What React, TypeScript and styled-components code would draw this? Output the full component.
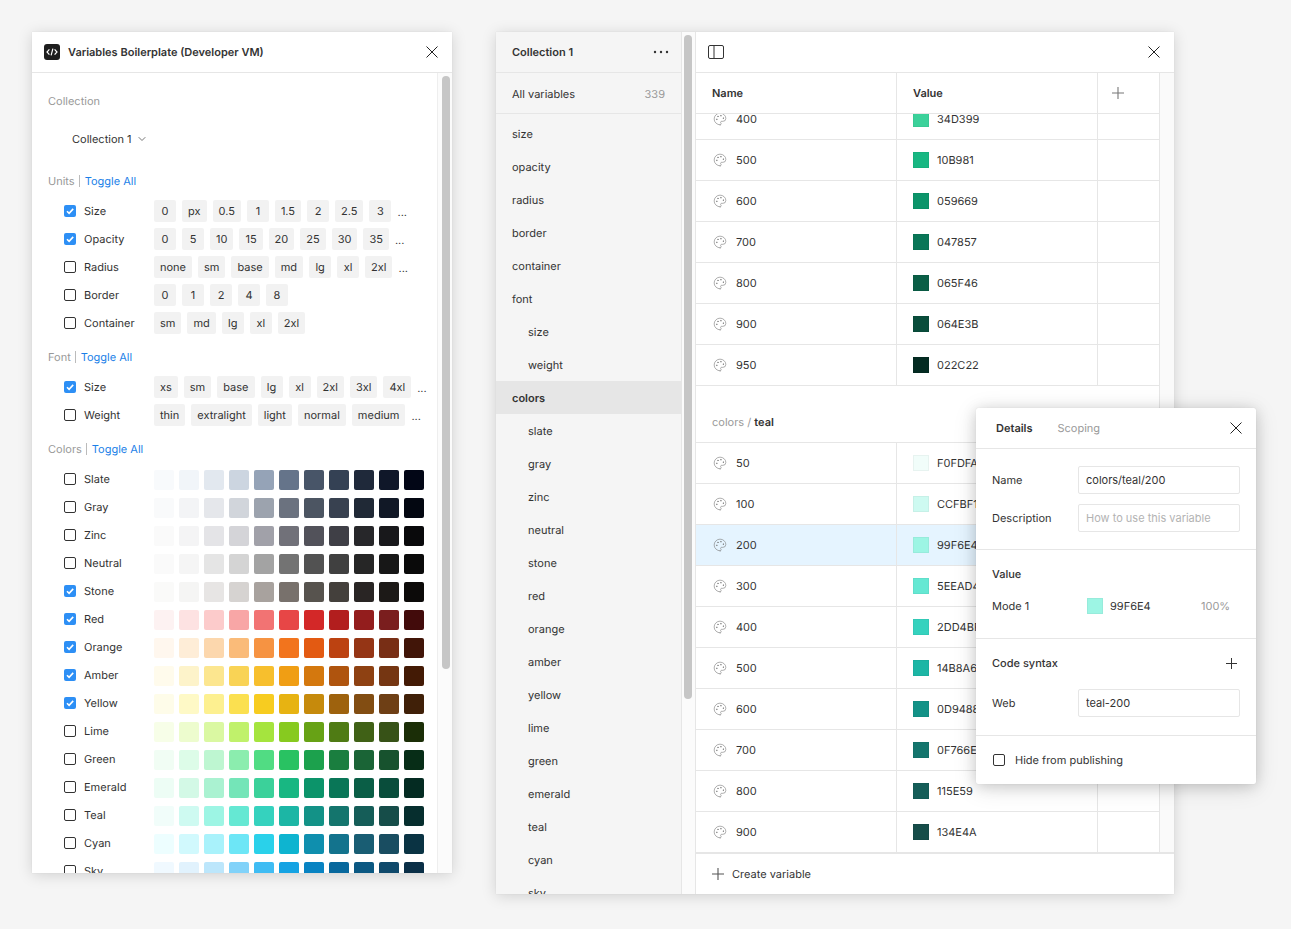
import React from "react";
import styled, { createGlobalStyle } from "styled-components";
import { Palette } from "lucide-react";

const Global = createGlobalStyle`
  html, body { margin: 0; padding: 0; background: #f5f5f5; }
  body { font-family: Inter, "Noto Sans", sans-serif; font-size: 11px; color: #333; text-rendering: geometricPrecision; }
  * { box-sizing: border-box; }
`;

const line = "#e6e6e6";

const Page = styled.div`
  position: relative; width: 1291px; height: 929px; overflow: hidden;
  display: flex; align-items: flex-start; gap: 44px; padding: 32px;
  background: #f5f5f5;
`;
const PluginWindow = styled.section`
  width: 420px; height: 841px; background: #fff; display: flex; flex-direction: column;
  box-shadow: 0 2px 14px rgba(0,0,0,.15), 0 0 1px rgba(0,0,0,.1);
`;
const TitleBar = styled.header`
  height: 41px; flex: none; display: flex; align-items: center; padding: 0 14px 0 12px; gap: 8px;
  border-bottom: 1px solid ${line};
`;
const LogoBox = styled.div`
  width: 16px; height: 16px; border-radius: 3px; background: #1e1e1e; display: flex; align-items: center; justify-content: center;
`;
const Title = styled.h1`
  flex: 1; margin: 0; font-size: 11px; font-weight: 600; color: #333; line-height: 16px;
`;
const CloseBtn = styled.svg`
  width: 12px; height: 12px; flex: none; stroke: #222; stroke-width: 1; fill: none;
`;
const PluginBody = styled.div`
  flex: 1; min-height: 0; display: flex;
`;
const PluginContent = styled.div`
  width: 405px; padding: 20px 0 0 16px; overflow: hidden;
`;
const ScrollGutter = styled.div<{ $w: number; $border?: boolean }>`
  width: ${p => p.$w}px; flex: none; padding: 3px 3px 0 ${p => p.$w - 11}px; background: #fbfbfb;
  border-left: ${p => (p.$border ? `1px solid #eee` : "none")};
`;
const ScrollThumb = styled.div<{ $h: number }>`
  width: 8px; height: ${p => p.$h}px; border-radius: 4px; background: #c6c6c6;
`;
const MutedLabel = styled.div`
  height: 16px; line-height: 16px; color: #999;
`;
const SelectRow = styled.div`
  height: 28px; margin: 16px 0 20px; padding-left: 24px; display: flex; align-items: center; gap: 6px; color: #333;
`;
const SectionHead = styled.div<{ $mt?: number }>`
  height: 16px; line-height: 16px; display: flex; align-items: center; gap: 4px; color: #999;
  margin-top: ${p => p.$mt ?? 0}px;
`;
const Divider = styled.span`
  width: 1px; height: 12px; background: #bbb;
`;
const ToggleLink = styled.a`
  color: #1a7fe8; margin-left: 1px;
`;
const RowList = styled.div<{ $mt: number }>`
  margin-top: ${p => p.$mt}px; padding-left: 16px; display: flex; flex-direction: column; gap: 6px;
`;
const OptRow = styled.div`
  height: 22px; display: flex; align-items: center;
`;
const Box = styled.span<{ $on?: boolean }>`
  width: 12px; height: 12px; flex: none; border-radius: 2px; display: flex; align-items: center; justify-content: center;
  background: ${p => (p.$on ? "#2d8ff5" : "#fff")};
  border: ${p => (p.$on ? "none" : "1px solid #333")};
`;
const OptName = styled.span`
  width: 78px; padding-left: 8px; flex: none; color: #333;
`;
const ChipSet = styled.div`
  display: flex; align-items: center; gap: 6px;
`;
const Chip = styled.span`
  height: 22px; min-width: 22px; padding: 0 6px; border-radius: 2px; background: #f2f2f2;
  display: flex; align-items: center; justify-content: center; color: #333; white-space: nowrap;
`;
const More = styled.span`
  color: #333; padding-top: 2px;
`;
const SwatchSet = styled.div`
  display: flex; gap: 5px; padding-top: 2px;
`;
const Swatch = styled.span<{ $c: string }>`
  width: 20px; height: 20px; border-radius: 2px; background: ${p => p.$c}; filter: saturate(.94);
`;

const VarWindow = styled.section`
  position: relative; width: 678px; height: 862px; background: #fff; display: flex;
  box-shadow: 0 2px 14px rgba(0,0,0,.15), 0 0 1px rgba(0,0,0,.1);
`;
const Sidebar = styled.aside`
  width: 186px; flex: none; background: #f5f5f5; border-right: 1px solid ${line}; display: flex; flex-direction: column; overflow: hidden;
`;
const SideHead = styled.div`
  height: 41px; flex: none; padding: 0 12px 0 16px; display: flex; align-items: center; justify-content: space-between;
  font-weight: 600; border-bottom: 1px solid ${line}; color: #333;
`;
const SideAll = styled.div`
  height: 41px; flex: none; padding: 1px 16px 0; display: flex; align-items: center; justify-content: space-between;
  border-bottom: 1px solid ${line}; color: #333;
`;
const AllCount = styled.span`
  color: #999;
`;
const SideList = styled.div`
  padding-top: 3px; display: flex; flex-direction: column;
`;
const SideItem = styled.div<{ $indent?: boolean; $sel?: boolean }>`
  height: 33px; flex: none; display: flex; align-items: center; padding-left: ${p => (p.$indent ? 32 : 16)}px;
  background: ${p => (p.$sel ? "#e6e6e6" : "transparent")}; font-weight: ${p => (p.$sel ? 600 : 400)}; color: #333;
`;
const Main = styled.div`
  flex: 1; min-width: 0; display: flex; flex-direction: column; border-left: 1px solid ${line};
`;
const TopBar = styled.div`
  height: 41px; flex: none; padding: 0 14px 0 12px; display: flex; align-items: center; justify-content: space-between;
  border-bottom: 1px solid ${line};
`;
const TableArea = styled.div`
  flex: 1; min-height: 0; display: flex;
`;
const TableCol = styled.div`
  width: 464px; flex: none; display: flex; flex-direction: column; border-right: 1px solid ${line};
`;
const TableGutter = styled.div`
  flex: 1; background: #fafafa;
`;
const HeadRow = styled.div`
  height: 41px; flex: none; display: grid; grid-template-columns: 201px 201px 1fr; border-bottom: 1px solid ${line};
`;
const HeadCell = styled.div<{ $last?: boolean }>`
  padding-left: ${p => (p.$last ? 14 : 16)}px; display: flex; align-items: center; font-weight: 600; color: #333;
  border-right: ${p => (p.$last ? "none" : `1px solid ${line}`)};
`;
const Scroller = styled.div`
  flex: 1; min-height: 0; overflow: hidden;
`;
const ScrollInner = styled.div`
  margin-top: -15px;
`;
const Row = styled.div<{ $active?: boolean }>`
  height: 41px; display: grid; grid-template-columns: 201px 201px 1fr; border-bottom: 1px solid ${line};
  background: ${p => (p.$active ? "#e5f4ff" : "transparent")};
`;
const NameCell = styled.div`
  padding-left: 17px; display: flex; align-items: center; gap: 9px; border-right: 1px solid ${line}; color: #333;
`;
const ValueCell = styled.div`
  padding-left: 16px; display: flex; align-items: center; gap: 8px; border-right: 1px solid ${line}; color: #333;
`;
const ColorChip = styled.span<{ $c: string }>`
  width: 16px; height: 16px; flex: none; background: ${p => p.$c}; box-shadow: inset 0 0 0 1px rgba(0,0,0,.04); filter: saturate(.94);
`;
const GroupHead = styled.div`
  height: 57px; padding: 28px 0 0 16px; line-height: 16px; border-bottom: 1px solid ${line}; color: #999;
`;
const GroupStrong = styled.b`
  font-weight: 600; color: #333;
`;
const Footer = styled.div`
  height: 42px; flex: none; border-top: 2px solid ${line}; padding-left: 16px; display: flex; align-items: center; gap: 8px; color: #333;
`;

const Popover = styled.aside`
  position: absolute; left: 976px; top: 408px; width: 280px; height: 376px; background: #fff; border-radius: 2px;
  box-shadow: 0 2px 14px rgba(0,0,0,.15), 0 4px 24px rgba(0,0,0,.12), 0 0 1px rgba(0,0,0,.15);
  display: flex; flex-direction: column;
`;
const PopHead = styled.div`
  height: 41px; flex: none; display: flex; align-items: center; gap: 25px; padding: 0 14px 0 20px; border-bottom: 1px solid ${line};
`;
const PopTab = styled.span<{ $on?: boolean }>`
  font-weight: ${p => (p.$on ? 600 : 400)}; color: ${p => (p.$on ? "#333" : "#999")};
`;
const PopHeadSpacer = styled.span`
  flex: 1;
`;
const PopSection = styled.div<{ $h: number; $pt: number; $noBorder?: boolean }>`
  height: ${p => p.$h}px; flex: none; padding: ${p => p.$pt}px 16px 0; display: flex; flex-direction: column;
  border-bottom: ${p => (p.$noBorder ? "none" : `1px solid ${line}`)};
`;
const FieldRow = styled.label<{ $mb?: number }>`
  height: 28px; display: flex; align-items: center; margin-bottom: ${p => p.$mb ?? 0}px; color: #333;
`;
const FieldName = styled.span`
  width: 86px; flex: none;
`;
const FieldInput = styled.input`
  width: 162px; height: 28px; border: 1px solid ${line}; border-radius: 2px; padding: 0 7px; outline: none;
  font: inherit; letter-spacing: inherit; color: #333; background: #fff;
  &::placeholder { color: #b3b3b3; }
`;
const PopTitle = styled.div`
  height: 16px; line-height: 16px; font-weight: 500; color: #333; display: flex; align-items: center; justify-content: space-between;
`;
const PlusSlot = styled.span`
  display: flex; margin-right: 3px;
`;
const ModeRow = styled.div`
  height: 16px; margin-top: 16px; display: flex; align-items: center; color: #333;
`;
const ModeName = styled.span`
  width: 95px; flex: none;
`;
const ModeHex = styled.span`
  margin-left: 7px; width: 91px;
`;
const ModePct = styled.span`
  color: #999;
`;
const HideRow = styled.div`
  height: 100%; display: flex; align-items: center; gap: 10px; padding-left: 1px; color: #333;
`;
const FieldGap = styled.div`
  height: 18px; flex: none;
`;

const X = () => (
  <CloseBtn viewBox="0 0 12 12"><path d="M.5.5l11 11M11.5.5l-11 11" /></CloseBtn>
);
const Plus = ({ c = "#333", s = 11 }: { c?: string; s?: number }) => (
  <svg width={s} height={s} viewBox="0 0 11 11" fill="none" stroke={c} strokeWidth="1"><path d="M5.5 0v11M0 5.5h11" /></svg>
);
const Check = () => (
  <svg width="12" height="12" viewBox="0 0 12 12" fill="none" stroke="#fff" strokeWidth="1.6"><path d="M3 6.2l2.1 2.1L9.2 3.9" /></svg>
);
const Chevron = () => (
  <svg width="8" height="6" viewBox="0 0 8 6" fill="none" stroke="#777" strokeWidth="1"><path d="M.7 1.2L4 4.5l3.3-3.3" /></svg>
);

const PAL: [string, boolean, string[]][] = [
  ["Slate", false, ["F8FAFC","F1F5F9","E2E8F0","CBD5E1","94A3B8","64748B","475569","334155","1E293B","0F172A","020617"]],
  ["Gray", false, ["F9FAFB","F3F4F6","E5E7EB","D1D5DB","9CA3AF","6B7280","4B5563","374151","1F2937","111827","030712"]],
  ["Zinc", false, ["FAFAFA","F4F4F5","E4E4E7","D4D4D8","A1A1AA","71717A","52525B","3F3F46","27272A","18181B","09090B"]],
  ["Neutral", false, ["FAFAFA","F5F5F5","E5E5E5","D4D4D4","A3A3A3","737373","525252","404040","262626","171717","0A0A0A"]],
  ["Stone", true, ["FAFAF9","F5F5F4","E7E5E4","D6D3D1","A8A29E","78716C","57534E","44403C","292524","1C1917","0C0A09"]],
  ["Red", true, ["FEF2F2","FEE2E2","FECACA","FCA5A5","F87171","EF4444","DC2626","B91C1C","991B1B","7F1D1D","450A0A"]],
  ["Orange", true, ["FFF7ED","FFEDD5","FED7AA","FDBA74","FB923C","F97316","EA580C","C2410C","9A3412","7C2D12","431407"]],
  ["Amber", true, ["FFFBEB","FEF3C7","FDE68A","FCD34D","FBBF24","F59E0B","D97706","B45309","92400E","78350F","451A03"]],
  ["Yellow", true, ["FEFCE8","FEF9C3","FEF08A","FDE047","FACC15","EAB308","CA8A04","A16207","854D0E","713F12","422006"]],
  ["Lime", false, ["F7FEE7","ECFCCB","D9F99D","BEF264","A3E635","84CC16","65A30D","4D7C0F","3F6212","365314","1A2E05"]],
  ["Green", false, ["F0FDF4","DCFCE7","BBF7D0","86EFAC","4ADE80","22C55E","16A34A","15803D","166534","14532D","052E16"]],
  ["Emerald", false, ["ECFDF5","D1FAE5","A7F3D0","6EE7B7","34D399","10B981","059669","047857","065F46","064E3B","022C22"]],
  ["Teal", false, ["F0FDFA","CCFBF1","99F6E4","5EEAD4","2DD4BF","14B8A6","0D9488","0F766E","115E59","134E4A","042F2E"]],
  ["Cyan", false, ["ECFEFF","CFFAFE","A5F3FC","67E8F9","22D3EE","06B6D4","0891B2","0E7490","155E75","164E63","083344"]],
  ["Sky", false, ["F0F9FF","E0F2FE","BAE6FD","7DD3FC","38BDF8","0EA5E9","0284C7","0369A1","075985","0C4A6E","082F49"]],
];

const UNITS: [string, boolean, string[], boolean][] = [
  ["Size", true, ["0","px","0.5","1","1.5","2","2.5","3"], true],
  ["Opacity", true, ["0","5","10","15","20","25","30","35"], true],
  ["Radius", false, ["none","sm","base","md","lg","xl","2xl"], true],
  ["Border", false, ["0","1","2","4","8"], false],
  ["Container", false, ["sm","md","lg","xl","2xl"], false],
];
const FONT: [string, boolean, string[], boolean][] = [
  ["Size", true, ["xs","sm","base","lg","xl","2xl","3xl","4xl"], true],
  ["Weight", false, ["thin","extralight","light","normal","medium"], true],
];

const SIDE: [string, boolean?, boolean?][] = [
  ["size"],["opacity"],["radius"],["border"],["container"],["font"],
  ["size",true],["weight",true],["colors",false,true],
  ...["slate","gray","zinc","neutral","stone","red","orange","amber","yellow","lime","green","emerald","teal","cyan","sky"].map(n => [n, true] as [string, boolean]),
];

const EMERALD: [string,string][] = [["400","34D399"],["500","10B981"],["600","059669"],["700","047857"],["800","065F46"],["900","064E3B"],["950","022C22"]];
const TEAL: [string,string][] = [["50","F0FDFA"],["100","CCFBF1"],["200","99F6E4"],["300","5EEAD4"],["400","2DD4BF"],["500","14B8A6"],["600","0D9488"],["700","0F766E"],["800","115E59"],["900","134E4A"]];

const OptionRows = ({ rows }: { rows: [string, boolean, string[], boolean][] }) => (
  <>
    {rows.map(([name, on, chips, more]) => (
      <OptRow key={name}>
        <Box $on={on}>{on && <Check />}</Box>
        <OptName>{name}</OptName>
        <ChipSet>
          {chips.map(c => <Chip key={c}>{c}</Chip>)}
          {more && <More>...</More>}
        </ChipSet>
      </OptRow>
    ))}
  </>
);

const VarRow = ({ n, hex, active }: { n: string; hex: string; active?: boolean }) => (
  <Row $active={active}>
    <NameCell><Palette size={14} strokeWidth={1} color="#777" />{n}</NameCell>
    <ValueCell><ColorChip $c={`#${hex}`} />{hex}</ValueCell>
    <div />
  </Row>
);

export default function App() {
  return (
    <Page>
      <Global />
      <PluginWindow>
        <TitleBar>
          <LogoBox>
            <svg width="12" height="10" viewBox="0 0 12 10" fill="none" stroke="#fff" strokeWidth="1.2">
              <path d="M3.4 2.4L1 5l2.4 2.6M8.6 2.4L11 5 8.6 7.6M6.9 1.6L5.1 8.4" />
            </svg>
          </LogoBox>
          <Title>Variables Boilerplate (Developer VM)</Title>
          <X />
        </TitleBar>
        <PluginBody>
          <PluginContent>
            <MutedLabel>Collection</MutedLabel>
            <SelectRow>Collection 1 <Chevron /></SelectRow>
            <SectionHead>Units <Divider /><ToggleLink>Toggle All</ToggleLink></SectionHead>
            <RowList $mt={11}><OptionRows rows={UNITS} /></RowList>
            <SectionHead $mt={15}>Font <Divider /><ToggleLink>Toggle All</ToggleLink></SectionHead>
            <RowList $mt={11}><OptionRows rows={FONT} /></RowList>
            <SectionHead $mt={15}>Colors <Divider /><ToggleLink>Toggle All</ToggleLink></SectionHead>
            <RowList $mt={11}>
              {PAL.map(([name, on, cols]) => (
                <OptRow key={name}>
                  <Box $on={on}>{on && <Check />}</Box>
                  <OptName>{name}</OptName>
                  <SwatchSet>{cols.map(c => <Swatch key={c} $c={`#${c}`} />)}</SwatchSet>
                </OptRow>
              ))}
            </RowList>
          </PluginContent>
          <ScrollGutter $w={15} $border><ScrollThumb $h={593} /></ScrollGutter>
        </PluginBody>
      </PluginWindow>

      <VarWindow>
        <Sidebar>
          <SideHead>
            Collection 1
            <svg width="16" height="4" viewBox="0 0 16 4" fill="#333"><circle cx="2" cy="2" r="1.2"/><circle cx="8" cy="2" r="1.2"/><circle cx="14" cy="2" r="1.2"/></svg>
          </SideHead>
          <SideAll>All variables <AllCount>339</AllCount></SideAll>
          <SideList>
            {SIDE.map(([n, indent, sel], i) => <SideItem key={i} $indent={indent} $sel={sel}>{n}</SideItem>)}
          </SideList>
        </Sidebar>
        <ScrollGutter $w={13}><ScrollThumb $h={664} /></ScrollGutter>
        <Main>
          <TopBar>
            <svg width="16" height="14" viewBox="0 0 16 14" fill="none" stroke="#333" strokeWidth="1">
              <rect x=".5" y=".5" width="15" height="13" rx="1.5" /><path d="M6 .5v13" />
            </svg>
            <X />
          </TopBar>
          <TableArea>
            <TableCol>
              <HeadRow>
                <HeadCell>Name</HeadCell>
                <HeadCell>Value</HeadCell>
                <HeadCell $last><Plus c="#777" s={12} /></HeadCell>
              </HeadRow>
              <Scroller>
                <ScrollInner>
                  {EMERALD.map(([n, h]) => <VarRow key={n} n={n} hex={h} />)}
                  <GroupHead>colors / <GroupStrong>teal</GroupStrong></GroupHead>
                  {TEAL.map(([n, h]) => <VarRow key={n} n={n} hex={h} active={n === "200"} />)}
                </ScrollInner>
              </Scroller>
            </TableCol>
            <TableGutter />
          </TableArea>
          <Footer><Plus c="#555" s={12} />Create variable</Footer>
        </Main>
      </VarWindow>

      <Popover>
        <PopHead>
          <PopTab $on>Details</PopTab>
          <PopTab>Scoping</PopTab>
          <PopHeadSpacer />
          <X />
        </PopHead>
        <PopSection $h={101} $pt={17}>
          <FieldRow $mb={10}><FieldName>Name</FieldName><FieldInput readOnly defaultValue="colors/teal/200" /></FieldRow>
          <FieldRow><FieldName>Description</FieldName><FieldInput readOnly placeholder="How to use this variable" /></FieldRow>
        </PopSection>
        <PopSection $h={89} $pt={16}>
          <PopTitle>Value</PopTitle>
          <ModeRow>
            <ModeName>Mode 1</ModeName>
            <ColorChip $c="#99F6E4" />
            <ModeHex>99F6E4</ModeHex>
            <ModePct>100%</ModePct>
          </ModeRow>
        </PopSection>
        <PopSection $h={97} $pt={16}>
          <PopTitle>Code syntax <PlusSlot><Plus /></PlusSlot></PopTitle>
          <FieldGap />
          <FieldRow><FieldName>Web</FieldName><FieldInput readOnly defaultValue="teal-200" /></FieldRow>
        </PopSection>
        <PopSection $h={48} $pt={0} $noBorder>
          <HideRow><Box />Hide from publishing</HideRow>
        </PopSection>
      </Popover>
    </Page>
  );
}
